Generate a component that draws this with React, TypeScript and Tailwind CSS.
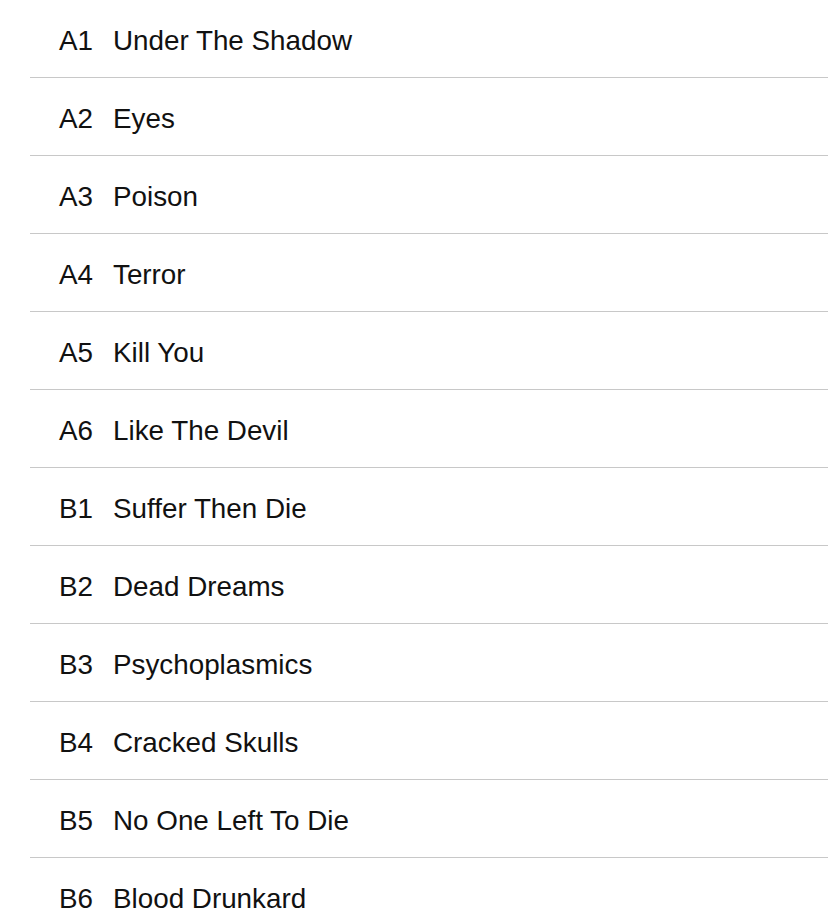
const tracks = [
  ["A1", "Under The Shadow"],
  ["A2", "Eyes"],
  ["A3", "Poison"],
  ["A4", "Terror"],
  ["A5", "Kill You"],
  ["A6", "Like The Devil"],
  ["B1", "Suffer Then Die"],
  ["B2", "Dead Dreams"],
  ["B3", "Psychoplasmics"],
  ["B4", "Cracked Skulls"],
  ["B5", "No One Left To Die"],
  ["B6", "Blood Drunkard"],
];

export default function App() {
  return (
    <div className="h-[922px] overflow-hidden bg-white pl-[30px] font-['Liberation_Sans',Arial,sans-serif] text-[#111]">
      {tracks.map(([pos, title]) => (
        <div key={pos} className="flex h-[78px] items-center border-b border-[#c8c8c8] pl-[29px] pt-[4px] text-[27.8px]">
          <span className="w-[54px] shrink-0">{pos}</span>
          <span>{title}</span>
        </div>
      ))}
    </div>
  );
}
